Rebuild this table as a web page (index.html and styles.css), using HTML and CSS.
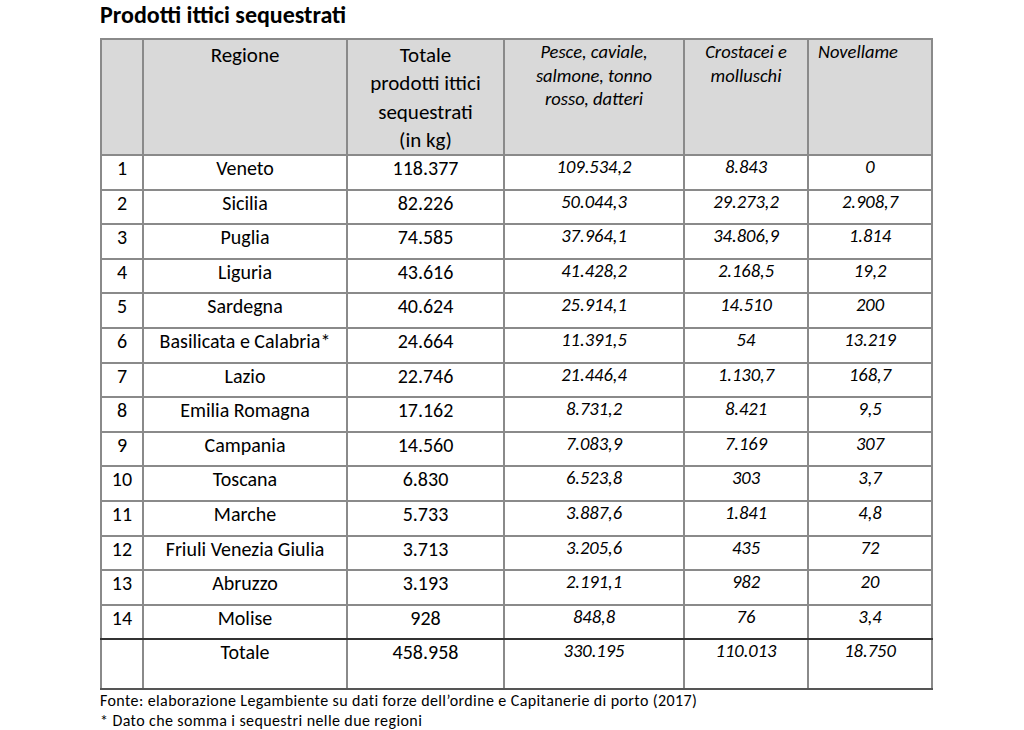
FILE: index.html
```html
<!DOCTYPE html>
<html lang="it">
<head>
<meta charset="utf-8">
<title>Prodotti ittici sequestrati</title>
<link rel="stylesheet" href="styles.css">
</head>
<body>
<div class="page">
  <h1 class="title">Prodotti ittici sequestrati</h1>
  <table class="data">
    <colgroup>
      <col class="c-n"><col class="c-reg"><col class="c-tot"><col class="c-pes"><col class="c-cro"><col class="c-nov">
    </colgroup>
    <thead>
      <tr>
        <th></th>
        <th class="h-main">Regione</th>
        <th class="h-main">Totale<br>prodotti ittici<br>sequestrati<br>(in kg)</th>
        <th class="h-it">Pesce, caviale,<br>salmone, tonno<br>rosso, datteri</th>
        <th class="h-it">Crostacei e<br>molluschi</th>
        <th class="h-it h-left">Novellame</th>
      </tr>
    </thead>
    <tbody>
      <tr><td>1</td><td>Veneto</td><td>118.377</td><td class="it">109.534,2</td><td class="it">8.843</td><td class="it">0</td></tr>
      <tr><td>2</td><td>Sicilia</td><td>82.226</td><td class="it">50.044,3</td><td class="it">29.273,2</td><td class="it">2.908,7</td></tr>
      <tr><td>3</td><td>Puglia</td><td>74.585</td><td class="it">37.964,1</td><td class="it">34.806,9</td><td class="it">1.814</td></tr>
      <tr><td>4</td><td>Liguria</td><td>43.616</td><td class="it">41.428,2</td><td class="it">2.168,5</td><td class="it">19,2</td></tr>
      <tr><td>5</td><td>Sardegna</td><td>40.624</td><td class="it">25.914,1</td><td class="it">14.510</td><td class="it">200</td></tr>
      <tr><td>6</td><td>Basilicata e Calabria*</td><td>24.664</td><td class="it">11.391,5</td><td class="it">54</td><td class="it">13.219</td></tr>
      <tr><td>7</td><td>Lazio</td><td>22.746</td><td class="it">21.446,4</td><td class="it">1.130,7</td><td class="it">168,7</td></tr>
      <tr><td>8</td><td>Emilia Romagna</td><td>17.162</td><td class="it">8.731,2</td><td class="it">8.421</td><td class="it">9,5</td></tr>
      <tr><td>9</td><td>Campania</td><td>14.560</td><td class="it">7.083,9</td><td class="it">7.169</td><td class="it">307</td></tr>
      <tr><td>10</td><td>Toscana</td><td>6.830</td><td class="it">6.523,8</td><td class="it">303</td><td class="it">3,7</td></tr>
      <tr><td>11</td><td>Marche</td><td>5.733</td><td class="it">3.887,6</td><td class="it">1.841</td><td class="it">4,8</td></tr>
      <tr><td>12</td><td>Friuli Venezia Giulia</td><td>3.713</td><td class="it">3.205,6</td><td class="it">435</td><td class="it">72</td></tr>
      <tr><td>13</td><td>Abruzzo</td><td>3.193</td><td class="it">2.191,1</td><td class="it">982</td><td class="it">20</td></tr>
      <tr><td>14</td><td>Molise</td><td>928</td><td class="it">848,8</td><td class="it">76</td><td class="it">3,4</td></tr>
    </tbody>
    <tfoot>
      <tr><td></td><td>Totale</td><td>458.958</td><td class="it">330.195</td><td class="it">110.013</td><td class="it">18.750</td></tr>
    </tfoot>
  </table>
  <p class="note note-first">Fonte: elaborazione Legambiente su dati forze dell’ordine e Capitanerie di porto (2017)</p>
  <p class="note">* Dato che somma i sequestri nelle due regioni</p>
</div>
</body>
</html>
```

FILE: styles.css
```css
html, body {
  margin: 0;
  padding: 0;
  background: #ffffff;
}

.page {
  padding: 0 0 0 100px;
  font-family: Carlito, Lato, "Open Sans", sans-serif;
  color: #000000;
}

.title {
  margin: 0;
  padding-top: 1px;
  height: 37px;
  font-size: 24px;
  line-height: 28px;
  font-weight: 700;
}

.data {
  border-collapse: collapse;
  table-layout: fixed;
  width: 831px;
}

.c-n { width: 42px; }
.c-reg { width: 204px; }
.c-tot { width: 157px; }
.c-pes { width: 180px; }
.c-cro { width: 124px; }
.c-nov { width: 124px; }

.data th,
.data td {
  border: 2px solid #8a8a8a;
  padding: 0;
  vertical-align: top;
  text-align: center;
}

.data th {
  background: #d9d9d9;
  height: 113px;
  font-weight: 400;
  box-sizing: border-box;
}

.data th.h-main {
  font-size: 21px;
  line-height: 28.25px;
  padding: 1px 4px 0;
}

.data th.h-it {
  font-size: 18.5px;
  line-height: 23.5px;
  font-style: italic;
  padding: 0 2px;
}

.data th.h-left {
  text-align: left;
  padding-left: 9px;
}

.data td {
  height: 34.6px;
  font-size: 20px;
  line-height: 24px;
  padding-top: 0;
  box-sizing: border-box;
}

.data td.it {
  font-size: 18.5px;
  font-style: italic;
  line-height: 22px;
}

.data tbody tr:last-child td {
  border-bottom-color: #333333;
}

.data tfoot td {
  height: 50px;
  border-bottom-color: #555555;
}

.note {
  margin: 0;
  font-size: 16px;
  line-height: 19.2px;
  letter-spacing: 0.4px;
}

.note-first {
  margin-top: 1px;
}
```
